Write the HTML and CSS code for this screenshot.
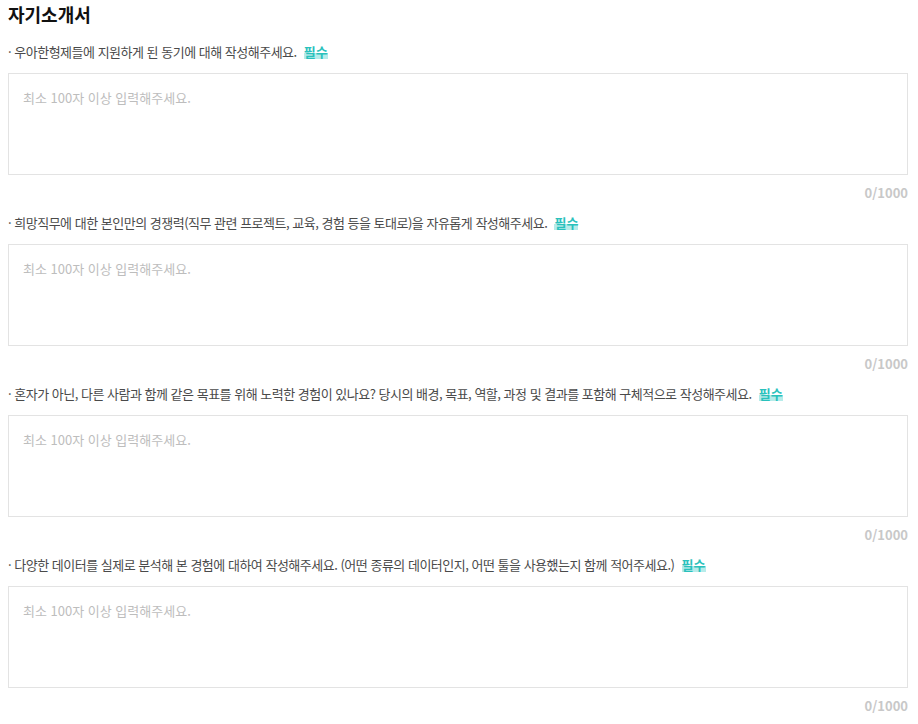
FILE: index.html
```html
<!DOCTYPE html>
<html lang="ko">
<head>
    <meta charset="UTF-8">
    <link rel="stylesheet" href="styles.css">
    <title>자기소개서</title>
</head>
<body>
<div class="essay">
    <h1 class="essay__title">자기소개서</h1>

    <div class="question">
        <p class="question__label">· 우아한형제들에 지원하게 된 동기에 대해 작성해주세요. <span class="required">필수</span></p>
        <textarea class="question__input" placeholder="최소 100자 이상 입력해주세요."></textarea>
        <div class="question__count">0/1000</div>
    </div>

    <div class="question">
        <p class="question__label">· 희망직무에 대한 본인만의 경쟁력(직무 관련 프로젝트, 교육, 경험 등을 토대로)을 자유롭게 작성해주세요. <span class="required">필수</span></p>
        <textarea class="question__input" placeholder="최소 100자 이상 입력해주세요."></textarea>
        <div class="question__count">0/1000</div>
    </div>

    <div class="question">
        <p class="question__label">· 혼자가 아닌, 다른 사람과 함께 같은 목표를 위해 노력한 경험이 있나요? 당시의 배경, 목표, 역할, 과정 및 결과를 포함해 구체적으로 작성해주세요. <span class="required">필수</span></p>
        <textarea class="question__input" placeholder="최소 100자 이상 입력해주세요."></textarea>
        <div class="question__count">0/1000</div>
    </div>

    <div class="question">
        <p class="question__label">· 다양한 데이터를 실제로 분석해 본 경험에 대하여 작성해주세요. (어떤 종류의 데이터인지, 어떤 툴을 사용했는지 함께 적어주세요.) <span class="required">필수</span></p>
        <textarea class="question__input" placeholder="최소 100자 이상 입력해주세요."></textarea>
        <div class="question__count">0/1000</div>
    </div>
</div>
</body>
</html>
```

FILE: styles.css
```css
body, html {
    margin: 0;
    padding: 0;
    background: #fff;
    font-family: "Noto Sans CJK KR", "Noto Sans", sans-serif;
    font-size: 13px;
    color: #555;
}

.essay {
    width: 900px;
    padding: 0 8px;
}

.essay__title {
    margin: 0;
    font-size: 18px;
    line-height: 28px;
    font-weight: 700;
    color: #111;
}

/* Вопрос анкеты */

.question {
    margin-top: 14px;
}
.question + .question {
    margin-top: 10px;
}

.question__label {
    margin: 0;
    line-height: 20px;
    color: #4a4a4a;
    letter-spacing: -0.5px;
}

.required {
    margin-left: 4px;
    font-weight: 700;
    letter-spacing: 0;
    color: #2ac1bc;
    background: linear-gradient(to bottom, transparent 60%, #b6ecea 60%, #b6ecea 92%, transparent 92%);
}

.question__input {
    display: block;
    box-sizing: border-box;
    width: 100%;
    height: 102px;
    margin-top: 11px;
    padding: 14px 14px;
    border: 1px solid #e3e3e3;
    resize: none;
    outline: none;
    font-family: inherit;
    font-size: 13px;
    line-height: 20px;
    color: #333;
}
.question__input::placeholder {
    color: #bdbdbd;
}

.question__count {
    margin-top: 8px;
    text-align: right;
    line-height: 20px;
    color: #c8c8c8;
    font-weight: 700;
}
```
